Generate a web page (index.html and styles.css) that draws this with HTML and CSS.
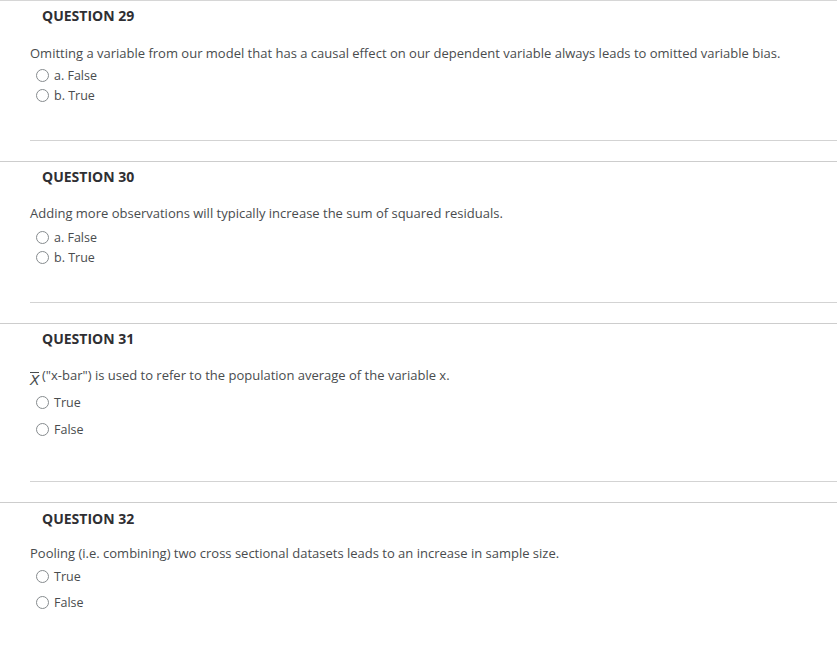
FILE: index.html
```html
<!DOCTYPE html>
<html lang="en">
<head>
<meta charset="utf-8">
<title>Quiz</title>
<link rel="stylesheet" href="styles.css">
</head>
<body>
<div class="quiz">
  <section class="question q-first">
    <h2 class="q-title">QUESTION 29</h2>
    <p class="q-text">Omitting a variable from our model that has a causal effect on our dependent variable always leads to omitted variable bias.</p>
    <ul class="opts">
      <li class="opt"><span class="radio"></span><span>a. False</span></li>
      <li class="opt"><span class="radio"></span><span>b. True</span></li>
    </ul>
    <hr class="divider">
  </section>
  <section class="question">
    <h2 class="q-title">QUESTION 30</h2>
    <p class="q-text">Adding more observations will typically increase the sum of squared residuals.</p>
    <ul class="opts">
      <li class="opt"><span class="radio"></span><span>a. False</span></li>
      <li class="opt"><span class="radio"></span><span>b. True</span></li>
    </ul>
    <hr class="divider">
  </section>
  <section class="question q-31">
    <h2 class="q-title">QUESTION 31</h2>
    <p class="q-text"><span class="xbar">X</span>("x-bar") is used to refer to the population average of the variable x.</p>
    <ul class="opts">
      <li class="opt"><span class="radio"></span><span>True</span></li>
      <li class="opt"><span class="radio"></span><span>False</span></li>
    </ul>
    <hr class="divider">
  </section>
  <section class="question q-32">
    <h2 class="q-title">QUESTION 32</h2>
    <p class="q-text">Pooling (i.e. combining) two cross sectional datasets leads to an increase in sample size.</p>
    <ul class="opts">
      <li class="opt"><span class="radio"></span><span>True</span></li>
      <li class="opt"><span class="radio"></span><span>False</span></li>
    </ul>
  </section>
</div>
</body>
</html>
```
FILE: styles.css
```css
html, body {
  margin: 0;
  padding: 0;
  background: #ffffff;
}
body {
  font-family: "Open Sans", "Liberation Sans", sans-serif;
  color: #494c4e;
  font-size: 13px;
}
.question {
  border-top: 1px solid #cdcdcd;
  padding-bottom: 20px;
}
.q-first {
  border-top-color: #d6d6d6;
}
.q-title {
  margin: 0;
  padding: 6px 0 0 42px;
  font-size: 14px;
  line-height: 18px;
  font-weight: 700;
  color: #2f2f33;
}
.q-text {
  margin: 18px 0 0 30px;
  line-height: 18px;
  font-size: 13px;
  color: #494c4e;
}
.opts {
  list-style: none;
  margin: 5px 0 0 0;
  padding: 0 0 0 36px;
}
.opt {
  display: flex;
  align-items: center;
  gap: 5px;
  height: 20px;
  font-size: 12.5px;
  color: #494c4e;
}
.radio {
  width: 11px;
  height: 11px;
  border: 1px solid #868b8e;
  border-radius: 50%;
  background: #fff;
  flex: none;
}
.divider {
  margin: 35px 0 0 30px;
  border: 0;
  border-top: 1px solid #d3d3d3;
  height: 0;
}
.q-first .q-text {
  margin-top: 19px;
}
.q-first .opts {
  margin-top: 3px;
}
.q-31 .opts {
  margin-top: 2px;
}
.q-31 .opt {
  height: 27px;
}
.q-31 .divider {
  margin-top: 38px;
}
.xbar {
  display: inline-block;
  font-family: "DejaVu Sans", sans-serif;
  font-style: italic;
  font-weight: 300;
  font-size: 14px;
  line-height: 13px;
  border-top: 1px solid #494c4e;
  padding-top: 1px;
  margin-right: 3px;
  vertical-align: -5px;
  width: 9px;
}
.q-32 .q-title {
  padding-top: 7px;
}
.q-32 .q-text {
  margin-top: 16px;
}
.q-32 .opts {
  margin-top: 1px;
}
.q-32 .opt {
  height: 26px;
}
```
